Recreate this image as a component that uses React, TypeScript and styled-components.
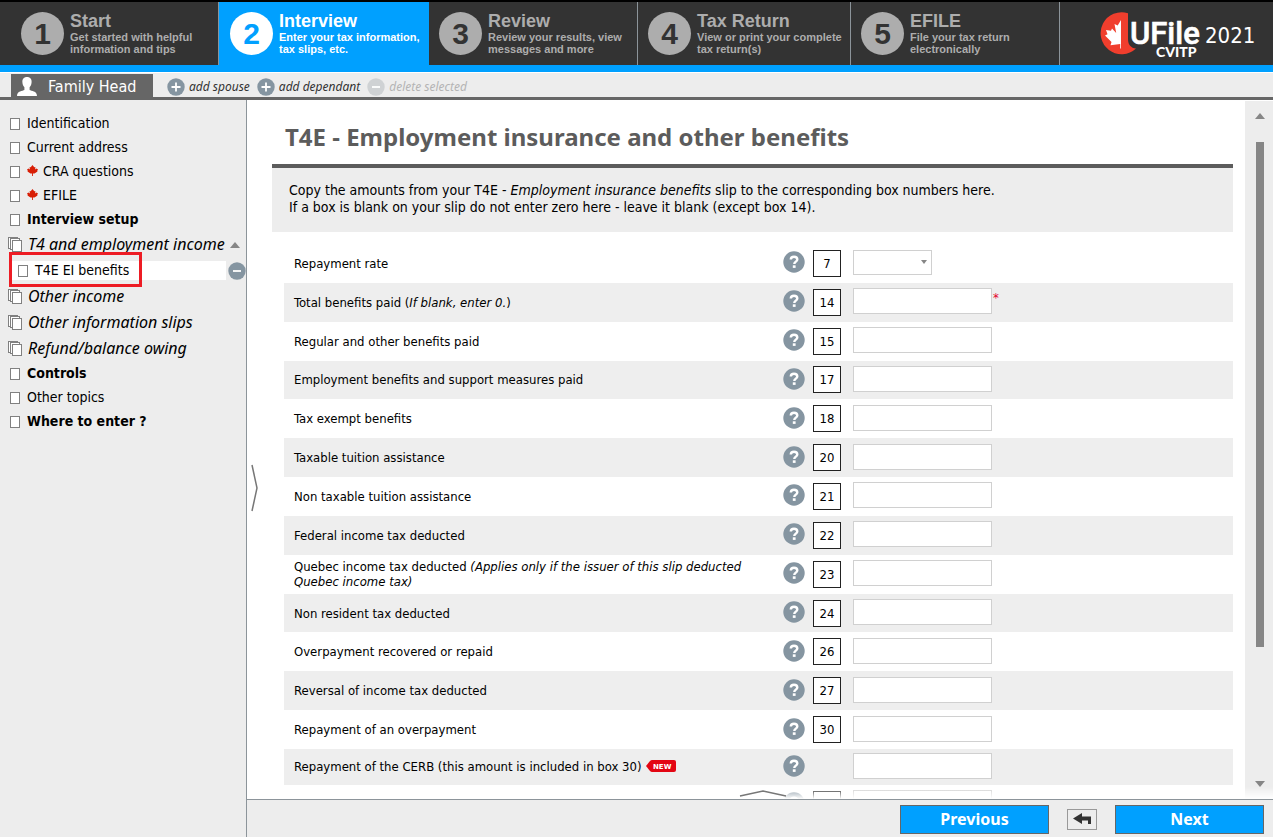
import React from "react";
import styled, { createGlobalStyle, css } from "styled-components";

const ui = `"DejaVu Sans Condensed", "Noto Sans", sans-serif`;
const wide = `"Noto Sans", "DejaVu Sans Condensed", sans-serif`;
const steel = "#8595a1";
const blue = "#00a0ff";

const Global = createGlobalStyle`
  *, *::before, *::after { box-sizing: border-box; }
  body { margin: 0; background: #fff; color: #000; font-family: ${ui}; }
  button, input, select { font-family: inherit; }
`;

const Page = styled.div`
  display: flex;
  flex-direction: column;
  height: 100vh;
`;

const Header = styled.header`
  border-top: 2px solid #000;
  border-bottom: 7px solid ${blue};
  background: #333;
`;
const Steps = styled.nav`
  display: grid;
  grid-template-columns: 219fr 210fr 209fr 213fr 209fr 213fr;
  height: 63px;
`;
const Step = styled.a<{ $active?: boolean; $first?: boolean }>`
  display: flex;
  align-items: flex-start;
  gap: 6px;
  padding: 10px 0 0 ${(p) => (p.$first ? 21 : p.$active ? 11 : 10)}px;
  border-right: 1px solid ${(p) => (p.$active ? blue : "#8c949a")};
  background: ${(p) => (p.$active ? blue : "#333")};
  color: ${(p) => (p.$active ? "#fff" : "#adadad")};
  font-family: "Liberation Sans", sans-serif;
  font-weight: bold;
  text-decoration: none;
  white-space: nowrap;
`;
const StepNumber = styled.span<{ $active?: boolean }>`
  display: flex;
  flex: none;
  align-items: center;
  justify-content: center;
  width: 43px;
  height: 43px;
  border-radius: 50%;
  background: ${(p) => (p.$active ? "#fff" : "#adadad")};
  color: ${(p) => (p.$active ? blue : "#333")};
  font-size: 30px;
`;
const StepText = styled.span`
  display: flex;
  flex-direction: column;
  font-size: 11px;
  line-height: 12px;
`;
const StepTitle = styled.span`
  font-size: 18px;
  line-height: 19px;
`;
const Brand = styled.div`
  display: flex;
  align-items: flex-start;
  padding: 10px 0 0 40px;
  color: #fff;
`;
const Year = styled.span`
  margin-left: 5px;
  padding-top: 9px;
  font-size: 22px;
  line-height: 29px;
`;

const PersonBar = styled.div`
  display: flex;
  align-items: stretch;
  height: 28px;
  padding: 1px 0 0 11px;
  border-top: 1px solid #fff;
  border-bottom: 3px solid #666;
  background: #ededed;
`;
const PersonTab = styled.button`
  display: flex;
  align-items: center;
  gap: 11px;
  width: 142px;
  margin-right: 14px;
  padding: 2px 0 0 6px;
  border: 0;
  background: #666;
  color: #fff;
  font-size: 16px;
  white-space: nowrap;
`;
const PersonAction = styled.button`
  display: flex;
  align-items: center;
  gap: 4px;
  margin-right: 7px;
  padding: 2px 0 0;
  border: 0;
  background: none;
  color: #333;
  && { font-family: ${wide}; }
  font-size: 12px;
  font-style: italic;
  white-space: nowrap;
  &:disabled { color: #b4b4b4; }
`;

const Body = styled.div`
  display: flex;
  flex: 1;
  min-height: 0;
`;
const Sidebar = styled.nav`
  flex: none;
  width: 247px;
  border-right: 1px solid #8c949a;
  background: #ededed;
`;
const Topics = styled.ul`
  margin: 0;
  padding: 11px 0 0;
  list-style: none;
`;
const Topic = styled.li<{ $kind: string }>`
  position: relative;
  display: flex;
  align-items: center;
  height: ${(p) => (p.$kind === "group" || p.$kind === "slip" ? 26 : 24)}px;
  padding-left: ${(p) => (p.$kind === "group" ? 8 : p.$kind === "slip" ? 18 : 10)}px;
  white-space: nowrap;
  ${(p) =>
    p.$kind === "slip" &&
    css`
      &::before {
        content: "";
        position: absolute;
        inset: 4px 20px 3px 12px;
        background: #fff;
      }
    `}
`;
const TopicLink = styled.a<{ $kind: string }>`
  position: relative;
  display: flex;
  align-items: center;
  gap: ${(p) => (p.$kind === "group" ? 6 : 7)}px;
  color: #000;
  font-family: ${(p) => (p.$kind === "group" ? wide : ui)};
  font-size: ${(p) => (p.$kind === "group" ? 16 : 14)}px;
  line-height: 18px;
  font-style: ${(p) => (p.$kind === "group" ? "italic" : "normal")};
  font-weight: ${(p) => (p.$kind === "bold" ? "bold" : "normal")};
  text-decoration: none;
`;
const TopicText = styled.span`
  display: flex;
  align-items: center;
  gap: 5px;
  padding-bottom: 1px;
`;
const PageMark = styled.span`
  width: 10px;
  height: 12px;
  margin-top: 2px;
  border: 1px solid #808080;
  background: #fff;
`;
const Highlight = styled.span`
  position: absolute;
  z-index: 1;
  inset: -5px auto auto 9px;
  width: 133px;
  height: 35px;
  border: 3px solid #ed1c24;
`;
const RemoveButton = styled.button`
  position: relative;
  display: flex;
  margin: 2px 0 0 auto;
  padding: 0;
  border: 0;
  background: none;
`;
const Collapse = styled.span`
  display: flex;
  margin: 2px 6px 0 auto;
`;

const Main = styled.main`
  display: flex;
  flex: 1;
  flex-direction: column;
  min-width: 0;
`;
const Viewport = styled.div`
  position: relative;
  display: flex;
  flex: 1;
  min-height: 0;
  overflow: hidden;
`;
const Content = styled.div`
  flex: 1;
  min-width: 0;
  padding: 0 12px 0 25px;
`;
const Title = styled.h1`
  height: 64px;
  margin: 0;
  padding: 21px 0 0 13px;
  color: #5c5c5c;
  font-family: ${wide};
  font-size: 24px;
  line-height: 31px;
  white-space: nowrap;
`;
const Intro = styled.p`
  min-height: 68px;
  margin: 0 0 12px;
  padding: 14px 17px 13px;
  border-top: 4px solid #5c5c5c;
  background: #ededed;
  font-size: 14px;
  line-height: 17px;
`;
const Rows = styled.form`
  display: grid;
  grid-template-rows: repeat(13, 1fr) 36px 39px;
  height: 580px;
  margin-left: 12px;
`;
const Row = styled.div`
  display: grid;
  grid-template-columns: minmax(0, 499px) 30px 40px 1fr;
  align-items: center;
  padding-right: 4px;
  &:nth-child(even) { background: #eee; }
`;
const Label = styled.label`
  max-width: 470px;
  padding-left: 10px;
  font-size: 13px;
  line-height: 15px;
`;
const Help = styled.button`
  display: flex;
  padding: 0 0 2px;
  border: 0;
  background: none;
`;
const BoxNumber = styled.span`
  display: flex;
  align-items: center;
  justify-content: center;
  width: 28px;
  height: 27px;
  border: 1px solid #222;
  background: #fff;
  font-size: 13px;
`;
const Field = styled.span`
  display: flex;
  align-items: flex-start;
  padding-bottom: 2px;
`;
const TextInput = styled.input`
  width: 139px;
  height: 26px;
  border: 1px solid #d0d0d0;
  background: #fff;
`;
const SelectWrap = styled.span`
  position: relative;
  display: flex;
  svg { position: absolute; right: 5px; top: 10px; pointer-events: none; }
`;
const Select = styled.select`
  width: 79px;
  height: 25px;
  border: 1px solid #d0d0d0;
  border-radius: 0;
  background: #fff;
  appearance: none;
`;
const Required = styled.span`
  padding: 3px 0 0 1px;
  color: #e4002b;
  font-size: 13px;
  line-height: 14px;
`;
const NewTag = styled.svg`
  margin-left: 4px;
  vertical-align: -1px;
`;
const Fade = styled.div`
  position: absolute;
  inset: auto 0 0 0;
  height: 12px;
  background: linear-gradient(rgba(255, 255, 255, 0), #fff);
`;
const Handle = styled.button<{ $side: "left" | "bottom" }>`
  position: absolute;
  display: flex;
  padding: 0;
  border: 0;
  background: none;
  ${(p) => (p.$side === "left" ? "left: 4px; top: 364px;" : "left: 48%; bottom: 2px;")}
`;
const Scrollbar = styled.div`
  display: flex;
  flex: none;
  flex-direction: column;
  align-items: center;
  width: 28px;
  margin-top: 1px;
  padding: 12px 0 12px 2px;
  background: #ededed;
`;
const Track = styled.div`
  flex: 1;
  width: 8px;
  margin: 23px 0 0;
`;
const Thumb = styled.div`
  height: 79%;
  background: #868686;
`;
const Footer = styled.footer`
  display: flex;
  align-items: center;
  justify-content: flex-end;
  gap: 18px;
  height: 38px;
  padding: 1px 9px 0 0;
  border-top: 1px solid #8c949a;
  background: #ededed;
`;
const NavButton = styled.button`
  width: 149px;
  height: 29px;
  padding: 0;
  border: 1px solid #666;
  background: ${blue};
  color: #fff;
  && { font-family: ${wide}; }
  font-size: 16px;
  font-weight: bold;
`;
const BackButton = styled.button`
  display: flex;
  align-items: center;
  justify-content: center;
  width: 30px;
  height: 21px;
  padding: 0;
  border: 1px solid #999;
  background: #ededed;
`;

const RoundSign = ({ plus, faded }: { plus?: boolean; faded?: boolean }) => (
  <svg width="18" height="18" viewBox="0 0 18 18" aria-hidden>
    <circle cx="9" cy="9" r="8.7" fill={faded ? "#cfd2d4" : steel} />
    <path d={plus ? "M4.5 9h9M9 4.5v9" : "M5 9h8"} stroke="#fff" strokeWidth="1.8" />
  </svg>
);

const HelpIcon = () => (
  <svg width="22" height="22" viewBox="0 0 22 22" aria-hidden>
    <circle cx="11" cy="11" r="10.7" fill={steel} />
    <path d="M7.8 8.6C7.8 6.7 9.2 5.7 11 5.7s3.3 1 3.3 2.7c0 2.2-3 2.2-3 4.6" fill="none" stroke="#fff" strokeWidth="2.4" />
    <rect x="9.8" y="14.3" width="2.8" height="2.6" fill="#fff" />
  </svg>
);

const Triangle = ({ down, small }: { down?: boolean; small?: boolean }) => (
  <svg width={small ? 6 : 10} height={small ? 4 : 6} viewBox="0 0 10 6" preserveAspectRatio="none" aria-hidden>
    <path d={down ? "M0 0h10L5 6z" : "M0 6h10L5 0z"} fill="#868686" />
  </svg>
);

const Leaf = () => (
  <svg width="11" height="11" viewBox="0 0 100 100" aria-hidden>
    <path
      d="M50 0 66 20 76 18 74 40 86 32 100 42 92 54 96 60 68 78H54V100H46V78H32L4 60 8 54 0 42 14 32 26 40 24 18 34 20Z"
      fill="#d81e05"
    />
  </svg>
);

const Stack = () => (
  <svg width="14" height="15" viewBox="0 0 14 15" fill="#fff" stroke="#808080" aria-hidden>
    <rect x=".5" y=".5" width="9" height="11" />
    <rect x="2.5" y="1.5" width="9" height="11" />
    <rect x="4.5" y="3.5" width="9" height="11" />
  </svg>
);

const Person = () => (
  <svg width="20" height="19" viewBox="0 0 20 19" fill="#fff" aria-hidden>
    <path d="M10 0c3.2 0 4.8 2.2 4.6 5.2-.1 2.3-.9 3.7-2 5v2.9c1.7 1 7.4.9 7.400 5.900H0c0-5 5.700-4.900 7.400-5.900v-2.900c-1.100-1.300-1.900-2.700-2-5C5.200 2.200 6.800 0 10 0z" />
  </svg>
);

const Logo = () => (
  <svg width="100" height="50" viewBox="0 0 100 50" role="img" aria-label="UFile CVITP">
    <path d="M28 1.2A21 21 0 1 0 36 36.5C31 36 28 33 28 27z" fill="#f03e2d" />
    <path d="M21 8v28.5h-.8V32L10.5 33.2 11.5 30 5 23.5 7.5 22.2 6 18l5 .8 1-2.200 4.200 4.500L14.500 12l3.200 1.600z" fill="#fff" />
    <text x="30" y="32" fill="#fff" stroke="#fff" strokeWidth=".6" fontFamily="Roboto, sans-serif" fontWeight="500" fontSize="31">UFile</text>
    <text x="56" y="45" fill="#fff" fontFamily="Lato, sans-serif" fontWeight="900" fontSize="14">CVITP</text>
  </svg>
);

const steps = [
  { title: "Start", lines: ["Get started with helpful", "information and tips"] },
  { title: "Interview", lines: ["Enter your tax information,", "tax slips, etc."] },
  { title: "Review", lines: ["Review your results, view", "messages and more"] },
  { title: "Tax Return", lines: ["View or print your complete", "tax return(s)"] },
  { title: "EFILE", lines: ["File your tax return", "electronically"] },
];

const topics: { text: string; kind: string; leaf?: boolean; open?: boolean }[] = [
  { text: "Identification", kind: "page" },
  { text: "Current address", kind: "page" },
  { text: "CRA questions", kind: "page", leaf: true },
  { text: "EFILE", kind: "page", leaf: true },
  { text: "Interview setup", kind: "bold" },
  { text: "T4 and employment income", kind: "group", open: true },
  { text: "T4E EI benefits", kind: "slip" },
  { text: "Other income", kind: "group" },
  { text: "Other information slips", kind: "group" },
  { text: "Refund/balance owing", kind: "group" },
  { text: "Controls", kind: "bold" },
  { text: "Other topics", kind: "page" },
  { text: "Where to enter ?", kind: "bold" },
];

const fields: { label: React.ReactNode; box?: string; select?: boolean; required?: boolean }[] = [
  { label: "Repayment rate", box: "7", select: true },
  { label: <>Total benefits paid (<i>If blank, enter 0.</i>)</>, box: "14", required: true },
  { label: "Regular and other benefits paid", box: "15" },
  { label: "Employment benefits and support measures paid", box: "17" },
  { label: "Tax exempt benefits", box: "18" },
  { label: "Taxable tuition assistance", box: "20" },
  { label: "Non taxable tuition assistance", box: "21" },
  { label: "Federal income tax deducted", box: "22" },
  {
    label: <>Quebec income tax deducted <i>(Applies only if the issuer of this slip deducted Quebec income tax)</i></>,
    box: "23",
  },
  { label: "Non resident tax deducted", box: "24" },
  { label: "Overpayment recovered or repaid", box: "26" },
  { label: "Reversal of income tax deducted", box: "27" },
  { label: "Repayment of an overpayment", box: "30" },
  {
    label: (
      <>
        Repayment of the CERB (this amount is included in box 30)
        <NewTag width="30" height="12" viewBox="0 0 30 12">
          <path d="M0 6 4 1Q5 0 6 0H28Q30 0 30 2V10Q30 12 28 12H6Q5 12 4 11Z" fill="#e30613" />
          <text x="7" y="9" fill="#fff" fontFamily="DejaVu Sans" fontWeight="bold" fontSize="7">NEW</text>
        </NewTag>
      </>
    ),
  },
  { label: "", box: " " },
];

export default function App() {
  return (
    <Page>
      <Global />
      <Header>
        <Steps>
          {steps.map((s, i) => (
            <Step key={s.title} href="#" $active={i === 1} $first={i === 0}>
              <StepNumber $active={i === 1}>{i + 1}</StepNumber>
              <StepText>
                <StepTitle>{s.title}</StepTitle>
                {s.lines.map((l) => <span key={l}>{l}</span>)}
              </StepText>
            </Step>
          ))}
          <Brand>
            <Logo />
            <Year>2021</Year>
          </Brand>
        </Steps>
      </Header>

      <PersonBar>
        <PersonTab><Person />Family Head</PersonTab>
        <PersonAction><RoundSign plus />add spouse</PersonAction>
        <PersonAction><RoundSign plus />add dependant</PersonAction>
        <PersonAction disabled><RoundSign faded />delete selected</PersonAction>
      </PersonBar>

      <Body>
        <Sidebar>
          <Topics>
            {topics.map((t) => (
              <Topic key={t.text} $kind={t.kind}>
                <TopicLink href="#" $kind={t.kind}>
                  {t.kind === "group" ? <Stack /> : <PageMark />}
                  <TopicText>
                    {t.leaf && <Leaf />}
                    {t.text}
                  </TopicText>
                </TopicLink>
                {t.open && <Collapse><Triangle /></Collapse>}
                {t.kind === "slip" && (
                  <>
                    <RemoveButton aria-label="Remove slip"><RoundSign /></RemoveButton>
                    <Highlight />
                  </>
                )}
              </Topic>
            ))}
          </Topics>
        </Sidebar>

        <Main>
          <Viewport>
            <Content>
              <Title>T4E - Employment insurance and other benefits</Title>
              <Intro>
                Copy the amounts from your T4E - <i>Employment insurance benefits</i> slip to the corresponding box numbers here.
                <br />
                If a box is blank on your slip do not enter zero here - leave it blank (except box 14).
              </Intro>
              <Rows>
                {fields.map((f, i) => (
                  <Row key={i}>
                    <Label htmlFor={`field-${i}`}>{f.label}</Label>
                    <Help type="button" aria-label="Help"><HelpIcon /></Help>
                    {f.box ? <BoxNumber>{f.box}</BoxNumber> : <span />}
                    <Field>
                      {f.select ? (
                        <SelectWrap>
                          <Select id={`field-${i}`}><option /></Select>
                          <Triangle down small />
                        </SelectWrap>
                      ) : (
                        <TextInput id={`field-${i}`} />
                      )}
                      {f.required && <Required>*</Required>}
                    </Field>
                  </Row>
                ))}
              </Rows>
            </Content>
            <Scrollbar>
              <Triangle />
              <Track><Thumb /></Track>
              <Triangle down />
            </Scrollbar>
            <Fade />
            <Handle $side="left" aria-label="Toggle sidebar">
              <svg width="8" height="48" viewBox="0 0 8 48"><path d="M1 1 6 24 1 47" fill="none" stroke="#777" strokeWidth="1.5" /></svg>
            </Handle>
            <Handle $side="bottom" aria-label="Show more">
              <svg width="48" height="8" viewBox="0 0 48 8"><path d="M1 7 24 2 47 7" fill="none" stroke="#777" strokeWidth="1.5" /></svg>
            </Handle>
          </Viewport>
          <Footer>
            <NavButton>Previous</NavButton>
            <BackButton aria-label="Back">
              <svg width="18" height="12" viewBox="0 0 18 12"><path d="M0 5.5 9 0v3.5h9V11h-3V7.5H9V11z" fill="#333" /></svg>
            </BackButton>
            <NavButton>Next</NavButton>
          </Footer>
        </Main>
      </Body>
    </Page>
  );
}
